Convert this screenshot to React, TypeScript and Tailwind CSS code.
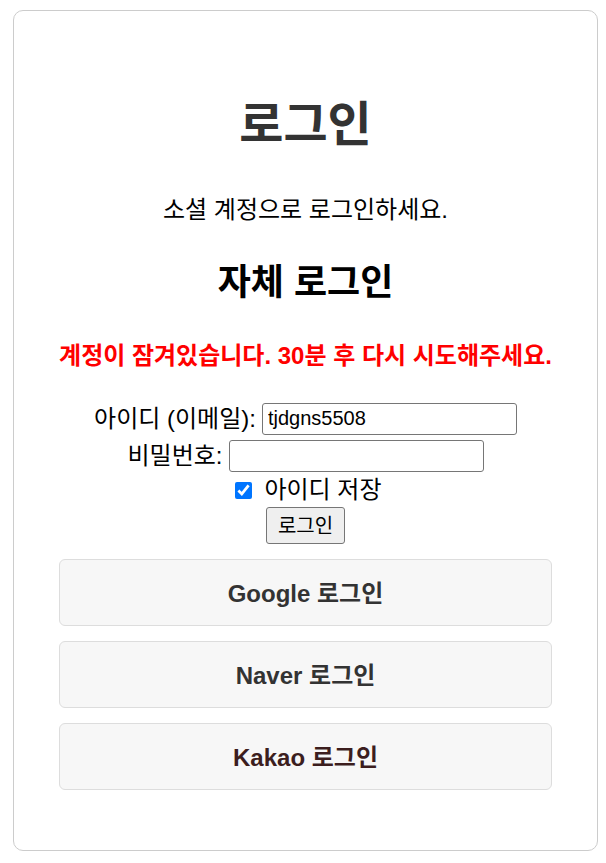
import React from "react";

export default function App() {
  const font = { fontFamily: '"Liberation Sans", "Noto Sans CJK KR", sans-serif' };
  return (
    <div className="w-[606px] h-[863px] bg-white pt-[10px]" style={font}>
      <div className="ml-[13px] w-[585px] h-[841px] border border-[#cccccc] rounded-[10px] px-[45px] pt-[86px] flex flex-col items-center text-black">
        <h1 className="text-[48px] leading-[56px] font-bold text-[#333333]">로그인</h1>
        <p className="mt-[41px] text-[24px] leading-[32px]">소셜 계정으로 로그인하세요.</p>
        <h2 className="mt-[35px] text-[36px] leading-[44px] font-bold">자체 로그인</h2>
        <p className="mt-[35px] text-[24px] leading-[32px] font-bold text-[#ff0000] whitespace-nowrap">계정이 잠겨있습니다. 30분 후 다시 시도해주세요.</p>
        <form className="mt-[28px] flex flex-col items-center text-[24px]">
          <div className="flex items-center h-[37px]">
            <label className="mr-[6px]">아이디 (이메일):</label>
            <input
              defaultValue="tjdgns5508"
              className="w-[255px] h-[32px] border border-[#767676] rounded-[3px] px-[5px] text-[20px] bg-white"
            />
          </div>
          <div className="flex items-center h-[37px]">
            <label className="mr-[6px]">비밀번호:</label>
            <input
              type="password"
              className="w-[255px] h-[32px] border border-[#767676] rounded-[3px] px-[5px] text-[20px] bg-white"
            />
          </div>
          <div className="flex items-center h-[30px] pt-[2px]">
            <input type="checkbox" defaultChecked className="ml-[6px] w-[17px] h-[17px] mr-[12px] accent-[#0075ff]" />
            <span>아이디 저장</span>
          </div>
          <button
            type="button"
            className="mt-[3px] w-[79px] h-[37px] border border-[#767676] rounded-[3px] bg-[#efefef] text-[20px]"
          >
            로그인
          </button>
        </form>
        <div className="mt-[15px] w-full flex flex-col gap-[15px]">
          {[
            { t: "Google 로그인", c: "text-[#333333]" },
            { t: "Naver 로그인", c: "text-[#333333]" },
            { t: "Kakao 로그인", c: "text-[#3c1e1e]" },
          ].map((b) => (
            <button
              key={b.t}
              type="button"
              className={`w-full h-[67px] pt-[3px] border border-[#dddddd] rounded-[6px] bg-[#f7f7f7] text-[24px] font-bold ${b.c}`}
            >
              {b.t}
            </button>
          ))}
        </div>
      </div>
    </div>
  );
}
